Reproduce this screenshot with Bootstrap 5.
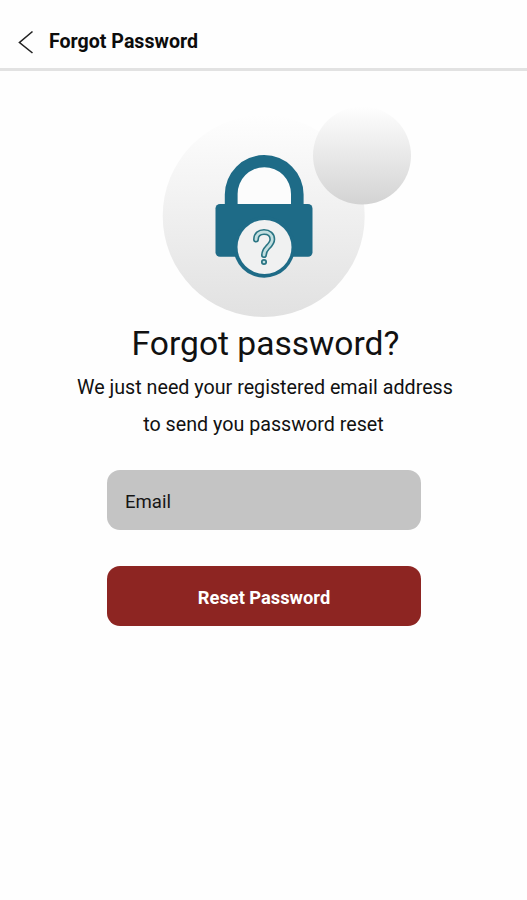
<!DOCTYPE html>
<html lang="en">
<head>
<meta charset="utf-8">
<meta name="viewport" content="width=device-width, initial-scale=1">
<title>Forgot Password</title>
<link href="https://cdn.jsdelivr.net/npm/bootstrap@5.3.0/dist/css/bootstrap.min.css" rel="stylesheet">
<style>
  body { font-family: Roboto, "Liberation Sans", sans-serif; color: #111; background: #fefefe; }
  .top-bar { height: 71px; padding: 16px 18px 0; border-bottom: 3px solid #e2e2e2; }
  .top-title { font-size: 19.6px; line-height: 24px; color: #0c0c0c; margin-left: 15px; }
  .hero-art { width: 270px; height: 220px; margin-top: 29px; margin-left: 43px; }
  .hero-title { font-size: 33.6px; line-height: 40px; margin-top: 4px; padding-left: 4px; }
  .hero-copy { font-size: 19.7px; line-height: 37px; margin-top: 5px; padding-left: 3px; }
  .copy-end { margin-right: 3px; }
  .form-column { width: 314px; margin-top: 27px; margin-left: 1px; gap: 36px; }
  .email-field, .email-field:focus { height: 60px; border-radius: 13px; background: #c4c4c4; padding: 4px 18px 0; font-size: 18.6px; color: #111; }
  .email-field::placeholder { color: #161616; opacity: 1; }
  .reset-btn, .reset-btn:hover { height: 60px; border-radius: 13px; background: #8d2522; color: #fff; font-size: 18.3px; padding-top: 9px; }
</style>
</head>
<body>
<header class="top-bar d-flex align-items-center">
  <a href="#" class="d-flex" aria-label="Back">
    <svg width="16" height="24" viewBox="0 0 16 24" fill="none" stroke="#222" stroke-width="1.6"><path d="M14.5 1.500 1.500 12.500 14.500 23"/></svg>
  </a>
  <h1 class="top-title fw-bold mb-0">Forgot Password</h1>
</header>
<main class="d-flex flex-column align-items-center text-center">
  <svg class="hero-art" viewBox="150 100 270 220" aria-hidden="true">
    <defs>
      <linearGradient id="bigFade" x1="0" y1="0" x2="0" y2="1"><stop offset="0" stop-color="#fefefe"/><stop offset="1" stop-color="#e1e1e1"/></linearGradient>
      <linearGradient id="smallFade" x1="0" y1="0" x2="0" y2="1"><stop offset="0" stop-color="#fefefe"/><stop offset="1" stop-color="#d3d3d3"/></linearGradient>
    </defs>
    <circle cx="263.7" cy="216" r="101" fill="url(#bigFade)"/>
    <circle cx="362" cy="155.5" r="49" fill="url(#smallFade)"/>
    <path d="M237.5 205V194a26.8 26.8 0 0 1 53.6 0v11z" fill="#fcfcfc"/>
    <g fill="#1e6b87">
      <path d="M224.8 206V194.500a39.400 39.400 0 0 1 78.800 0V206H291V194a26.700 26.700 0 0 0-53.400 0v12z"/>
      <rect x="215.5" y="204" width="97" height="52.700" rx="4.500"/>
      <circle cx="264.200" cy="247" r="30.700"/>
    </g>
    <circle cx="264.500" cy="247" r="27" fill="#f0f1f1"/>
    <g fill="none" stroke-linecap="round" stroke-linejoin="round">
      <path d="M256 239.500C256 234.500 259.500 232 264 232C269 232 272.300 235 272.300 239.300C272.300 243 270 245 267.500 247.500C265 250 264.200 251.800 264 255" stroke="#2a7583" stroke-width="6"/>
      <path d="M256 239.500C256 234.500 259.500 232 264 232C269 232 272.300 235 272.300 239.300C272.300 243 270 245 267.500 247.500C265 250 264.200 251.800 264 255" stroke="#c2dfe0" stroke-width="2.800"/>
      <circle cx="264" cy="262" r="2.200" fill="#c2dfe0" stroke="#2a7583" stroke-width="1.700"/>
    </g>
  </svg>
  <h2 class="hero-title fw-normal mb-0">Forgot password?</h2>
  <p class="hero-copy mb-0">We just need your registered email address<br><span class="copy-end">to send you password reset</span></p>
  <form class="form-column d-flex flex-column">
    <input type="email" class="email-field form-control border-0 shadow-none" placeholder="Email" aria-label="Email">
    <button type="button" class="reset-btn btn border-0 fw-bold w-100">Reset Password</button>
  </form>
</main>
<script src="https://cdn.jsdelivr.net/npm/bootstrap@5.3.0/dist/js/bootstrap.bundle.min.js"></script>
</body>
</html>
